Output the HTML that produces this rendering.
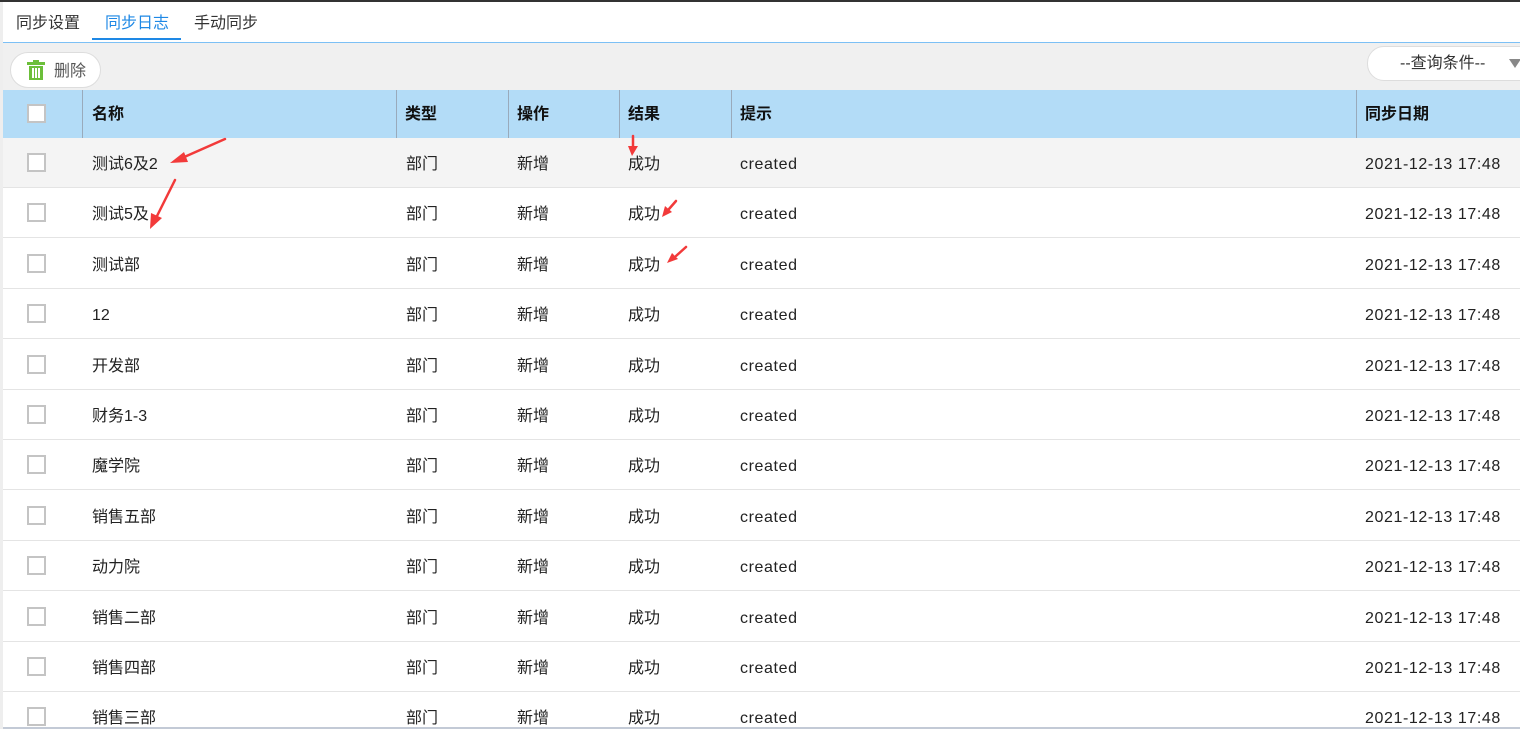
<!DOCTYPE html><html><head><meta charset="utf-8"><style>
*{margin:0;padding:0;box-sizing:border-box}
html,body{width:1520px;height:729px;overflow:hidden}
body{background:#fff;font-family:"Liberation Sans","Noto Sans CJK SC",sans-serif;font-size:16px;color:#222;position:relative}
.top{position:absolute;left:0;top:0;width:1520px;height:2px;background:#333}
.leftb{position:absolute;left:0;top:2px;width:3px;height:727px;background:#eee}
.tab{position:absolute;top:14px;font-size:16px;line-height:20px;color:#333}
.ul{position:absolute;left:92px;top:38px;width:89px;height:2px;background:#1e88e5}
.bl{position:absolute;left:3px;top:42px;width:1517px;height:1px;background:#7cc0f5}
.tb{position:absolute;left:3px;top:43px;width:1517px;height:47px;background:#f0f0f0}
.btn{position:absolute;left:10px;top:52px;width:91px;height:36px;border:1px solid #ddd;border-radius:18px;background:#fff}
.btn span{position:absolute;left:43px;top:9px;line-height:20px;color:#555}
.sel{position:absolute;left:1367px;top:46px;width:170px;height:35px;border:1px solid #ddd;border-radius:17px;background:#fff}
.sel span{position:absolute;left:32px;top:7px;line-height:20px;color:#333}
.hd{position:absolute;left:3px;top:90px;width:1517px;height:48px;background:#b3dcf7}
.vl{position:absolute;top:90px;width:1px;height:48px;background:#9ab}
.th{position:absolute;top:92px;line-height:46px;font-weight:bold;color:#111}
.row{position:absolute;left:3px;width:1517px;height:50px;border-bottom:1px solid #e4e4e4}
.cb{position:absolute;width:19px;height:19px;border:2px solid #c4c4c4;background:#fff}
.c{position:absolute;top:2px;line-height:50px;white-space:nowrap}
.l{letter-spacing:0.6px}
.bot{position:absolute;left:3px;top:727px;width:1517px;height:2px;background:#c3cad6}
</style></head><body>
<div class="top"></div><div class="leftb"></div>
<div class="tab" style="left:16px">同步设置</div>
<div class="tab" style="left:105px;color:#1e88e5">同步日志</div>
<div class="tab" style="left:194px">手动同步</div>
<div class="ul"></div><div class="bl"></div>
<div class="tb"></div>
<div class="btn"><svg style="position:absolute;left:15px;top:6px" width="20" height="22" viewBox="0 0 20 22"><rect x="7" y="1" width="6" height="2" fill="#6cbf3a"/><rect x="1" y="3" width="18" height="3" fill="#6cbf3a"/><path d="M3 7h14v14H3z" fill="#6cbf3a"/><rect x="6" y="9" width="2" height="10" fill="#fff"/><rect x="9" y="9" width="2" height="10" fill="#fff"/><rect x="12" y="9" width="2" height="10" fill="#fff"/></svg><span>删除</span></div>
<div class="sel"><span>--查询条件--</span><svg style="position:absolute;left:141px;top:12px" width="12" height="9"><path d="M0 0h12L6 9z" fill="#888"/></svg></div>
<div class="hd"></div>
<div class="cb" style="left:27px;top:104px"></div>
<div class="vl" style="left:82px"></div><div class="vl" style="left:396px"></div><div class="vl" style="left:508px"></div><div class="vl" style="left:619px"></div><div class="vl" style="left:731px"></div><div class="vl" style="left:1356px"></div>
<div class="th" style="left:92px">名称</div><div class="th" style="left:405px">类型</div><div class="th" style="left:517px">操作</div><div class="th" style="left:628px">结果</div><div class="th" style="left:740px">提示</div><div class="th" style="left:1365px">同步日期</div>
<div id="rows"></div>
<script>
var n=["测试6及2","测试5及","测试部","12","开发部","财务1-3","魔学院","销售五部","动力院","销售二部","销售四部","销售三部"],h="";
n.forEach(function(t,i){var y=138+i*50.4;h+='<div class="row" style="top:'+y+'px;'+(i==0?'background:#f4f4f4':'')+'"><div class="cb" style="left:24px;top:15px"></div><div class="c" style="left:89px">'+t+'</div><div class="c" style="left:403px">部门</div><div class="c" style="left:514px">新增</div><div class="c" style="left:625px">成功</div><div class="c l" style="left:737px">created</div><div class="c l" style="left:1362px">2021-12-13 17:48</div></div>'});
document.getElementById('rows').innerHTML=h;
</script>
<div class="bot"></div>
<svg style="position:absolute;left:0;top:0" width="1520" height="729">
<g fill="#f23a3a" stroke="#f23a3a" stroke-width="2.5" stroke-linecap="round">
<line x1="225" y1="139" x2="182" y2="158"/><polygon points="170,163 184,152 188,162" stroke-width="0"/>
<line x1="175" y1="180" x2="156" y2="218"/><polygon points="150,229 151,213 162,218" stroke-width="0"/>
<line x1="633" y1="136" x2="633" y2="147"/><polygon points="632,156 628,146 638,146" stroke-width="0"/>
<line x1="676" y1="201" x2="669" y2="209"/><polygon points="662,217 665,206 672,212" stroke-width="0"/>
<line x1="686" y1="247" x2="676" y2="256"/><polygon points="667,263 672,253 678,259" stroke-width="0"/>
</g></svg>
</body></html>
